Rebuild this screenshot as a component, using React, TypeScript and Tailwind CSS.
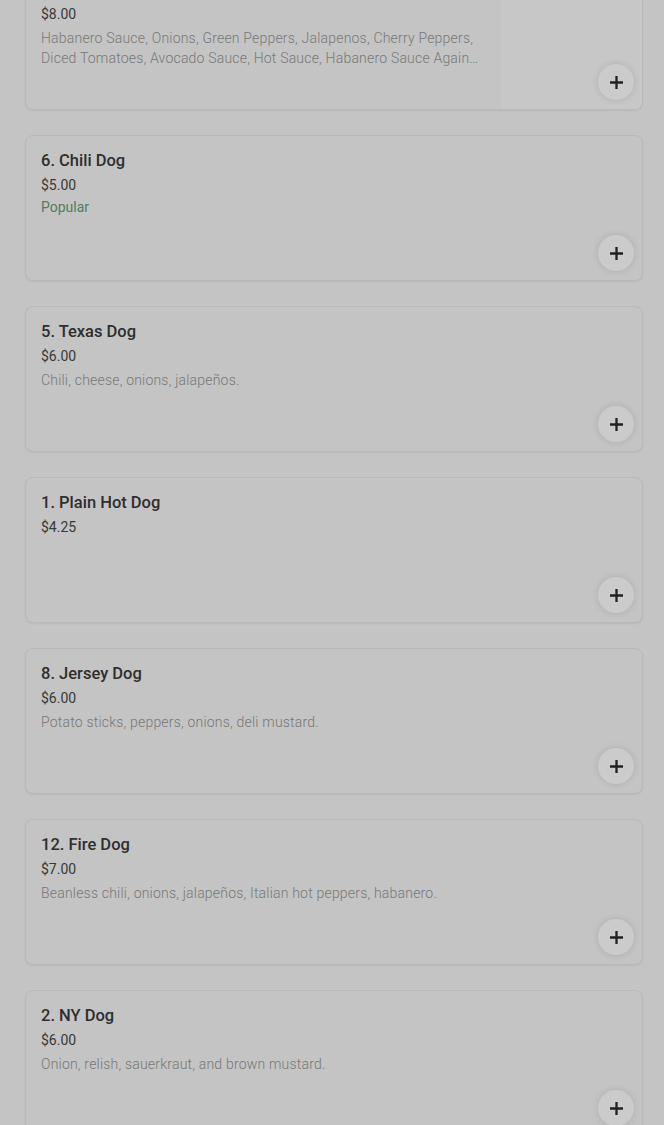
import React from "react";

type Item = {
  title: string;
  price: string;
  desc?: string;
  popular?: boolean;
  image?: boolean;
};

const items: Item[] = [
  {
    title: "11. Habanero Dog",
    price: "$8.00",
    desc: "Habanero Sauce, Onions, Green Peppers, Jalapenos, Cherry Peppers, Diced Tomatoes, Avocado Sauce, Hot Sauce, Habanero Sauce Again, Extra Cheese, Bacon Bits",
    image: true,
  },
  { title: "6. Chili Dog", price: "$5.00", popular: true },
  { title: "5. Texas Dog", price: "$6.00", desc: "Chili, cheese, onions, jalapeños." },
  { title: "1. Plain Hot Dog", price: "$4.25" },
  { title: "8. Jersey Dog", price: "$6.00", desc: "Potato sticks, peppers, onions, deli mustard." },
  { title: "12. Fire Dog", price: "$7.00", desc: "Beanless chili, onions, jalapeños, Italian hot peppers, habanero." },
  { title: "2. NY Dog", price: "$6.00", desc: "Onion, relish, sauerkraut, and brown mustard." },
];

function PlusButton() {
  return (
    <div className="absolute right-[8px] bottom-[9px] w-[36px] h-[36px] rounded-full bg-[#cbcbcb] shadow-[0_0_7px_rgba(0,0,0,0.12)] flex items-center justify-center">
      <svg width="13" height="13" viewBox="0 0 13 13">
        <path d="M6.5 1v11M1 6.5h11" stroke="#202020" strokeWidth="2.3" strokeLinecap="square" />
      </svg>
    </div>
  );
}

function Card({ item, first }: { item: Item; first?: boolean }) {
  return (
    <div
      className={`relative shrink-0 h-[146px] ml-[25px] w-[618px] rounded-[8px] border border-[#b9b9b9] bg-[#c4c4c4] shadow-[0_1px_2px_rgba(0,0,0,0.06)] flex overflow-hidden ${
        first ? "mt-[-36px]" : ""
      }`}
    >
      <div className="flex-1 min-w-0 pl-[15px] pr-[20px] pt-[15px]">
        <div className="text-[16.5px] leading-[20px] font-medium text-[#2e2e2e]">{item.title}</div>
        <div className="mt-[4px] text-[14px] leading-[20px] text-[#383838]">{item.price}</div>
        {item.popular && (
          <div className="mt-[2px] text-[14px] leading-[20px] text-[#4e7f62]">Popular</div>
        )}
        {item.desc && (
          <div className="mt-[4px] text-[14px] leading-[20px] font-light tracking-[0.2px] text-[#777777] line-clamp-2">
            {item.desc}
          </div>
        )}
      </div>
      {item.image && <div className="w-[141px] h-full bg-[#c7c7c7] shrink-0" />}
      <PlusButton />
    </div>
  );
}

export default function App() {
  return (
    <div
      className="w-[664px] h-[1125px] bg-[#c4c4c4] overflow-hidden flex flex-col gap-[25px]"
      style={{ fontFamily: "Roboto, 'Liberation Sans', sans-serif" }}
    >
      {items.map((it, i) => (
        <Card key={i} item={it} first={i === 0} />
      ))}
    </div>
  );
}
